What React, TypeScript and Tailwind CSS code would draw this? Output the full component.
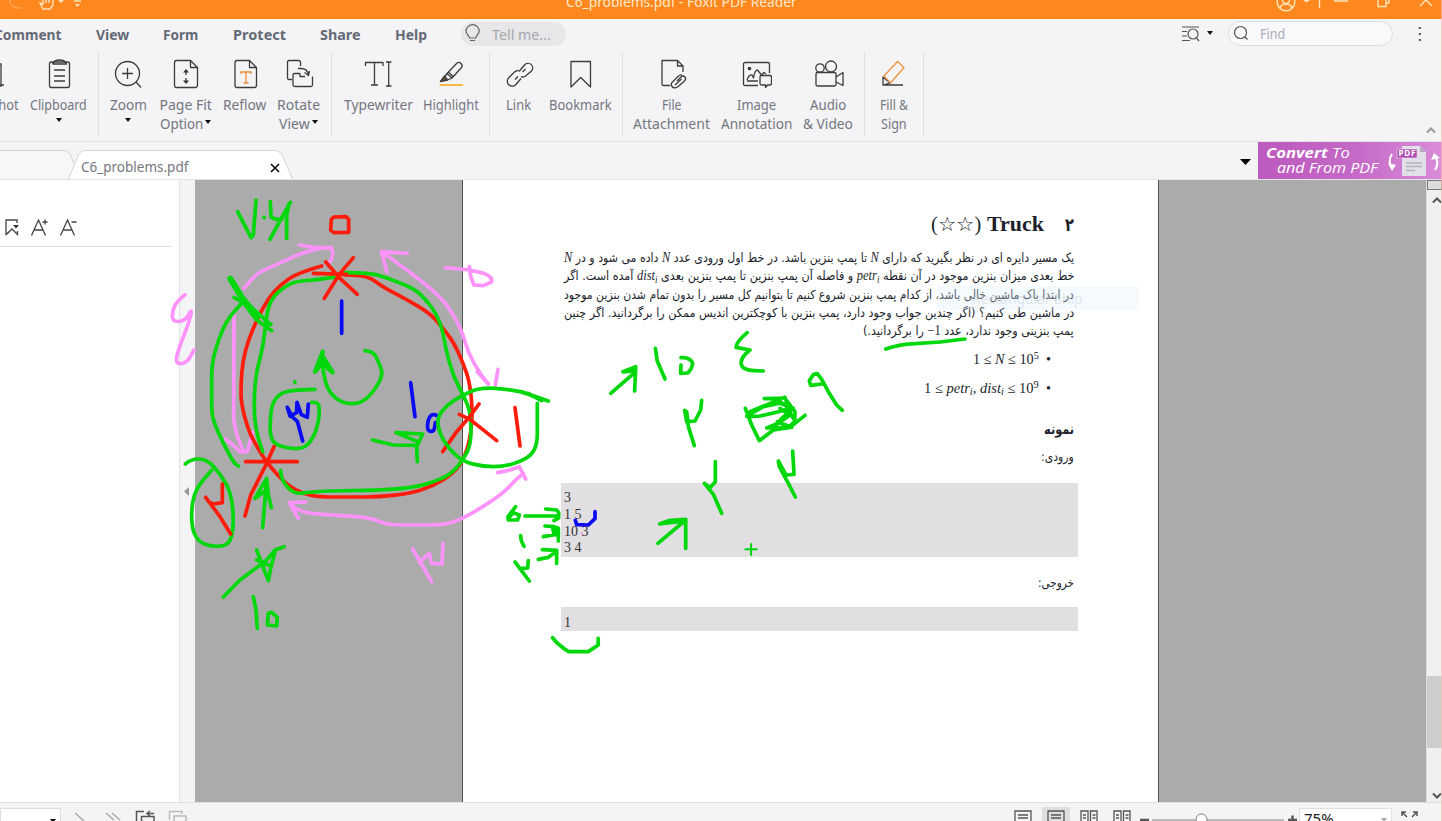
import React, { useLayoutEffect, useRef, useState } from 'react';

const UI = "font-['Noto_Sans','Open_Sans',sans-serif]";
const SERIF = "font-['Liberation_Serif',serif]";
const FA = "font-['DejaVu_Sans',sans-serif]";

/* Single line of text condensed or widened to fill the width of its box. */
function Fit({ className, rtl, children }: { className: string; rtl?: boolean; children: React.ReactNode }) {
  const outer = useRef<HTMLSpanElement>(null);
  const inner = useRef<HTMLSpanElement>(null);
  const [k, setK] = useState(1);
  useLayoutEffect(() => {
    if (outer.current && inner.current) setK(outer.current.offsetWidth / inner.current.offsetWidth);
  }, []);
  return (
    <span ref={outer} dir="ltr" className={`flex shrink-0 ${className}`}>
      <span
        ref={inner}
        dir={rtl ? 'rtl' : 'ltr'}
        className="shrink-0 origin-left whitespace-nowrap"
        style={{ transform: `scaleX(${k})` }}
      >
        {children}
      </span>
    </span>
  );
}

function Icon({ children }: { children: React.ReactNode }) {
  return (
    <svg viewBox="0 0 32 32" className="h-8 w-8 shrink-0" fill="none" stroke="#3c3c3c" strokeWidth="1.3" strokeLinejoin="round">
      {children}
    </svg>
  );
}

const Caret = ({ className = '' }: { className?: string }) => (
  <svg viewBox="0 0 6 4" className={`h-1 w-1.5 shrink-0 ${className}`} fill="#111">
    <path d="M0 0H6L3 4Z" />
  </svg>
);

type ToolProps = { w: string; icon: React.ReactNode; a: string; aw: string; b?: string; bw?: string; caret?: boolean };

function Tool({ w, icon, a, aw, b, bw, caret }: ToolProps) {
  return (
    <div className={`flex shrink-0 flex-col items-center pt-[7px] ${w}`}>
      <Icon>{icon}</Icon>
      <div className="flex h-[19px] items-center mt-[5px]">
        <Fit className={aw}>{a}</Fit>
      </div>
      {b ? (
        <div className="flex h-[19px] items-center gap-0.5">
          <Fit className={bw || ''}>{b}</Fit>
          {caret && <Caret className="-mt-1" />}
        </div>
      ) : (
        caret && <Caret className="mt-1" />
      )}
    </div>
  );
}

const Sep = ({ className = '' }: { className?: string }) => (
  <div className={`mt-0.5 h-[83px] w-px shrink-0 bg-[#dfdfe3] ${className}`} />
);

const GREEN = '#00d80c';
const RED = '#ff1c0a';
const PINK = '#fd92fb';
const BLUE = '#0a0af5';

type Ink = [string, string, number?];

/* Rounds a polyline given as "x y x y ..." by curving through segment midpoints. */
function smooth(points: string) {
  const n = points.trim().split(/\s+/).map(Number);
  let d = `M${n[0]} ${n[1]}`;
  for (let i = 2; i < n.length - 2; i += 2) {
    d += `Q${n[i]} ${n[i + 1]} ${(n[i] + n[i + 2]) / 2} ${(n[i + 1] + n[i + 3]) / 2}`;
  }
  return `${d}L${n[n.length - 2]} ${n[n.length - 1]}`;
}

const DIAGRAM: Ink[] = [
  [PINK, smooth('252 325 275 297 300 275 350 254 400 230 455 210 490 203 518 203 518 235 503 252') + 'M418 195L470 203L515 203'],
  [PINK, 'M222 395L221 720L232 770L250 815M197 777L225 800L240 816L262 815L278 757'],
  [PINK, smooth('75 344 50 365 38 390 36 425 75 424 98 382 85 435 58 500 44 552 80 550 102 510')],
  [PINK, smooth('672 220 740 270 800 315 860 370 905 450 925 520 960 580 985 612') + 'M680 275L665 215L742 220M985 612L952 575M1014 568L1006 615'],
  [PINK, 'M855 263L930 270L972 280Q1000 292 994 306L970 317L942 315L932 290L928 260'],
  [RED, smooth('485 258 410 280 360 315 325 355 295 410 265 480 248 545 243 610 243 670 265 750 285 790 320 848 380 915 430 942 480 951 570 951 660 951 750 940 820 918 880 880 910 840 930 780 938 700 930 610 910 550 880 485 845 440 810 400 740 358 670 322 625 288 555 285')],
  [GREEN, smooth('555 278 630 278 690 297 765 327 800 362 828 400 848 450 858 510 880 590 915 655 932 700 934 790 910 840 870 885 810 910 750 924 650 931 510 932 450 937 400 942 365 900 362 872')],
  [GREEN, smooth('530 290 470 300 410 303 370 322 335 355 320 400 310 500 285 590 282 700 290 760 308 815')],
  [RED, 'M460 280L560 283M580 233L540 280L493 355M497 246L540 295L592 343'],
  [RED, 'M522 111L558 110L566 118L566 157L522 158L512 150L514 118Z'],
  [GREEN, 'M233 95L273 173L280 165L288 60M312 112L313 113M331 65L333 110Q345 122 367 116M391 67L365 113L330 178M387 72L380 105L380 175'],
  [GREEN, 'M211 296L245 352L292 408', 6],
  [GREEN, 'M222 352L250 368L290 420L335 452M255 365L300 405L322 425L333 433L310 432'],
  [GREEN, smooth('250 365 205 410 175 480 155 550 155 630 155 700 165 735 190 790 222 850 236 858')],
  [BLUE, 'M545 363V460M752 608L765 710'],
  [BLUE, smooth('832 707 816 700 803 720 802 753 822 755 826 728')],
  [BLUE, 'M382 682L396 710L412 724L428 783M382 682L390 708L410 698L411 667L424 704L442 712L445 672'],
  [GREEN, smooth('615 512 640 514 655 545 670 582 645 630 605 671 547 671 505 635 488 575 488 515')],
  [GREEN, 'M488 515L465 575L486 550L518 577L492 535M486 530L472 568', 4.3],
  [GREEN, smooth('465 628 380 629 345 655 332 690 329 782 370 803 430 808 460 775 478 720 478 668 455 667') + 'M404 606L405 607'],
  [GREEN, 'M638 780L700 795L772 796M708 758L788 762L770 800L772 845M708 758L770 784'],
  [RED, 'M957 672L925 715L890 755L848 815M898 703L930 718L1010 782M1065 683L1080 798'],
  [GREEN, smooth('1145 662 1110 642 1050 628 960 622 905 647 860 675 830 715 840 765 870 810 910 845 970 860 1030 860 1080 845 1115 825 1132 790 1132 730 1132 670') + 'M1165 663L1085 635M1140 660L1105 640'],
  [RED, 'M257 845H412M342 800L320 850L272 945L255 1008'],
  [GREEN, 'M308 1043L314 970L320 895M285 955L320 895L325 945L334 983M290 952L320 930'],
  [GREEN, smooth('76 852 92 837 140 837 180 880 215 940 222 1040 207 1097 155 1100 115 1085 95 1045 95 970 112 920 155 871')],
  [RED, 'M137 952L180 1010L212 1062M145 965L160 972L187 968L187 912'],
  [GREEN, 'M190 1251L240 1200L320 1140L345 1110L372 1100M290 1110L305 1150L325 1202L332 1165L345 1115M290 1140L325 1155'],
  [GREEN, 'M280 1250L288 1290L292 1345M325 1300L322 1335L350 1338L352 1312L335 1297Z'],
  [PINK, smooth('1090 880 1065 900 1030 940 930 1005 860 1035 770 1035 680 1035 630 1012 510 1005 420 997 388 968') + 'M388 968L437 966M388 968L415 1015M1013 878L1050 870L1078 860L1097 897'],
  [PINK, 'M758 1107L780 1145L815 1205M778 1148L808 1120L815 1150L846 1152L849 1090'],
  [GREEN, 'M1067 980L1044 1010L1045 1020L1073 1020L1078 1005L1060 998L1049 1010M1095 1008H1195M1157 987L1190 990L1196 998V1014L1182 1022'],
  [GREEN, 'M1155 1038L1182 1040L1195 1045V1083M1150 1070L1183 1064L1178 1045M1182 1042L1190 1065M1147 1109L1190 1111V1150M1188 1115L1165 1132L1135 1138'],
  [GREEN, 'M1082 1067L1084 1082L1092 1099M1065 1146L1080 1166L1103 1164L1105 1142M1080 1166L1108 1203'],
  [BLUE, 'M1246 1021L1250 1034L1285 1035L1305 1016V995'],
  [PINK, 'M1265 1060L1267 1061', 2],
];

const NOTES: Ink[] = [
  [GREEN, 'M323 55L328 92L350 147'],
  [GREEN, 'M198 190L268 125M232 125L268 110L265 183M235 126L262 122'],
  [GREEN, 'M580 8Q550 35 549 52L588 60Q562 80 563 102Q567 121 600 122L625 123'],
  [GREEN, 'M968 57Q1010 42 1050 41L1120 36L1190 27'],
  [GREEN, 'M330 640L408 570L335 582L360 572L408 568V655M345 580L395 574'],
  [GREEN, 'M575 658H607M591 642V675', 2],
  [GREEN, 'M35 923Q50 945 80 965L135 965L163 945V925'],
];

const SCRIBBLES: Ink[] = [
  [GREEN, 'M33 53Q60 50 68 70Q65 92 52 99L32 100L33 75'],
  [GREEN, 'M455 118L442 101L430 104L418 122L422 136L455 132M455 118L475 155L500 195L517 211'],
  [GREEN, 'M44 211L50 245L75 243L92 210L95 181M50 215L55 260L73 317'],
  [GREEN, 'M226 205L245 255L268 302L310 270L360 262L405 226M230 228L280 200L335 188L360 205L335 213L270 228L240 230M240 215L300 190L345 172M283 176L345 174'],
  [GREEN, 'M345 176L375 215L374 245L355 262L290 264L325 250L360 225L330 205M330 190L370 205L335 235L318 256M322 245L365 262M345 190L370 235'],
  [GREEN, 'M136 365V425L120 443L103 430L130 463L155 520'],
  [GREEN, 'M368 333L372 403L348 405L325 363L328 380L355 430L376 471'],
];

const Strokes = ({ items }: { items: Ink[] }) => (
  <>
    {items.map(([c, d, w], i) => (
      <path key={i} d={d} stroke={c} strokeWidth={w || 3.7} vectorEffect="non-scaling-stroke" />
    ))}
  </>
);

const V = ({ children }: { children: React.ReactNode }) => (
  <span dir="ltr" className="font-['Liberation_Serif',serif] text-[14px] italic">
    {children}
  </span>
);
const Sub = () => <sub className="text-[10px]">i</sub>;

const PageIcon = ({ split }: { split?: boolean }) => (
  <svg viewBox="0 0 18 12" className="h-3 w-[18px] shrink-0" fill="none" stroke="#555" strokeWidth="1.3">
    {split ? (
      <path d="M1 14V1H8V14M10.500 14V1H17V14M3 5H6M3 8H6M12.500 5H15.500M12.500 8H15.500" />
    ) : (
      <path d="M1 14V1H17V14M4 5H14M4 8H14" />
    )}
  </svg>
);

export default function App() {
  return (
    <div className={`relative flex h-[821px] w-[1442px] flex-col overflow-hidden bg-[#f4f3f6] text-[14px] leading-[19px] text-[#737780] ${UI}`}>
      {/* Title bar */}
      <div className="flex h-[19px] shrink-0 overflow-hidden bg-[#ff871d] text-[#ffe9c9]">
        <svg viewBox="0 0 90 19" className="h-[19px] w-[90px]" fill="none" stroke="#ffe0b8" strokeWidth="1.5">
          <path d="M10 0Q9 9 22 8" stroke="#ffb56e" strokeWidth="1" />
          <path d="M43 0V4L40 3L43 9H50L53 5V0M46 0V3M49 0V3" />
          <path d="M58 0H64L61 3ZM75 4H80L77.500 7Z" fill="#ffe0b8" stroke="none" />
          <path d="M74 1H81" />
        </svg>
        <div className="ml-[476px] -mt-[8px] flex w-[231px]">
          <Fit className="w-[231px]">C6_problems.pdf - Foxit PDF Reader</Fit>
        </div>
        <svg viewBox="0 0 167 19" className="ml-[478px] h-[19px] w-[167px]" fill="none" stroke="#ffe6bd" strokeWidth="1.4">
          <circle cx="11" cy="2" r="8.800" />
          <circle cx="11" cy="0" r="3.500" />
          <path d="M5 8Q6 4 11 4Q16 4 17 8M44.500 0V8M59 1H73M103 0V6.500H111V0M111 3H114V0M145 6L151 0L157 6" />
          <path d="M28 0H35L31.500 2.500Z" fill="#ffe6bd" stroke="none" />
        </svg>
      </div>

      {/* Menu */}
      <div className="flex h-8 shrink-0 items-center overflow-hidden pb-0.5 font-bold text-[#646a75]">
        <Fit className="-ml-1.5 w-[68px]">Comment</Fit>
        <Fit className="ml-[34px] w-[33px]">View</Fit>
        <Fit className="ml-[34px] w-[35px]">Form</Fit>
        <Fit className="ml-[35px] w-[53px]">Protect</Fit>
        <Fit className="ml-[34px] w-[41px]">Share</Fit>
        <Fit className="ml-[34px] w-[32px]">Help</Fit>
        <div className="ml-[34px] flex h-6 w-[105px] items-center rounded-full bg-[#e7e6e8] font-normal text-[#a6a9af]">
          <svg viewBox="0 0 24 24" className="h-6 w-6" fill="none" stroke="#666" strokeWidth="1.2">
            <path d="M8.500 16C8.500 13.500 5 12.500 5 9.300A6.600 6.600 0 0 1 18.200 9.300C18.200 12.500 14.700 13.500 14.700 16ZM9 18.500H14.200" />
          </svg>
          <Fit className="ml-[7px] w-[59px]">Tell me...</Fit>
        </div>
        <svg viewBox="0 0 20 18" className="ml-[615px] h-[18px] w-5" fill="none" stroke="#555" strokeWidth="1.2">
          <path d="M1 2H18M1 6.500H6M1 11H6M1 15.500H9M15.500 13L18 16" />
          <circle cx="12" cy="9" r="5" />
        </svg>
        <Caret className="-mt-0.5 ml-1.5" />
        <div className="ml-[15px] flex h-[25px] w-[165px] -translate-y-px items-center rounded-full border border-[#dddde1] bg-[#f9f8fb] font-normal text-[#a9acb8]">
          <svg viewBox="0 0 16 16" className="ml-1 h-4 w-4" fill="none" stroke="#555" strokeWidth="1.2">
            <circle cx="7.500" cy="7.500" r="6" />
            <path d="M12 12L14.500 14.500" />
          </svg>
          <Fit className="ml-[11px] w-[25px]">Find</Fit>
        </div>
        <svg viewBox="0 0 4 16" className="ml-[25px] h-4 w-1" fill="#666">
          <path d="M.7 1H3V3H.7ZM.7 7H3V9H.7ZM.7 13H3V15H.7Z" />
        </svg>
      </div>

      {/* Ribbon */}
      <div className="flex h-[91px] shrink-0 overflow-hidden border-b border-[#e2e2e5]">
        <div className="flex w-[19px] shrink-0 flex-col items-end pt-[7px]">
          <div className="mr-1"><Icon><path d="M4 6H18V29M15 27H21" /></Icon></div>
          <div className="mt-[5px] flex"><Fit className="w-[57px]">Snapshot</Fit></div>
        </div>
        <Tool w="w-[79px]" a="Clipboard" aw="w-[57px]" caret icon={<><rect x="6.500" y="4" width="20" height="25.500" rx="2" /><path d="M9.500 6H23.500Q22 2 16.500 2T9.500 6M11 12H22M11 18H22M11 23H22" /></>} />
        <Sep />
        <Tool w="w-[58px]" a="Zoom" aw="w-[37px]" caret icon={<><circle cx="15.500" cy="15.500" r="12" /><path d="M24 24L29 29.500M10 15.500H21M15.500 10V21" /></>} />
        <Tool w="w-[57px]" a="Page Fit" aw="w-[52px]" b="Option" bw="w-[43px]" caret icon={<><path d="M20.500 2.500H6.500Q4.500 2.500 4.500 5V27Q4.500 29.500 6.500 29.500H25Q27.500 29.500 27.500 27V9.500ZM20.500 2.500V9.500H27.500M16 12V17M16 20V25" /><path d="M13 14.500L16 11L19 14.500ZM13 22.500L16 26L19 22.500Z" fill="#333" stroke="none" /></>} />
        <Tool w="w-[61px]" a="Reflow" aw="w-[43px]" icon={<><path d="M20.500 2.500H8Q6 2.500 6 5V27Q6 29.500 8 29.500H25.500Q27.500 29.500 27.500 27V9.500ZM20.500 2.500V9.500H27.500" /><path d="M12 16V14H22V16M17 14V25M14.500 25H19.500" stroke="#f08a35" /></>} />
        <Tool w="w-[47px]" a="Rotate" aw="w-[43px]" b="View" bw="w-[31px]" caret icon={<><path d="M9 21.500H6Q4.500 21.500 4.500 20V4Q4.500 2.500 6 2.500H15.500Q17.500 2.500 17.500 4.500V8M17 15.500H11.500Q10 15.500 10 17V27Q10 28.500 12 28.500H28Q29.500 28.500 29.500 27V18.500M15 10.500H19Q24.500 11 25.500 17M17 15.500V18.500H22M21.500 14.500L25.500 17.500L26.500 13" /></>} />
        <Sep className="ml-[9px]" />
        <Tool w="w-[92px]" a="Typewriter" aw="w-[69px]" icon={<path d="M3.500 8V4.500H21V8M12.500 4.500V27M9 27H16M24 4H29.500M24 28H29.500M26.700 4V28" />} />
        <Tool w="w-[54px]" a="Highlight" aw="w-[56px]" icon={<><path d="M12 15.500L22 5Q24 3.500 26 5.500T26.500 9.500L17 20ZM12 15.500L9.500 19L12.500 22L17 20M13.500 14L18.500 19" /><path d="M9.500 18L5.500 23.500L12.500 22Z" fill="#6b512a" /><path d="M4.500 27H28" stroke="#fcb942" strokeWidth="2" /></>} />
        <Sep className="ml-[11px]" />
        <Tool w="w-[57px]" a="Link" aw="w-[25px]" icon={<><path d="M16 13.500L22 6.500A4.600 4.600 0 0 1 28.500 13L22 18.500Q19.500 19.500 18 18.500" /><path d="M15.500 12.500Q13 12.500 11.500 14L6 19.500A4.600 4.600 0 0 0 12.500 27L18 20.500M12 21.500L15 18.500M19.500 14L22.500 11" /></>} />
        <Tool w="w-[66px]" a="Bookmark" aw="w-[63px]" icon={<path d="M7 3.500H26.500V29L16.700 19.500L7 29Z" />} />
        <Sep className="ml-[9px]" />
        <Tool w="w-[97px]" a="File" aw="w-[19px]" b="Attachment" bw="w-[77px]" icon={<><path d="M14 27.500H7Q6 27.500 6 26V2.500H21.500L27 8V14M21.500 2.500V8H27" /><path d="M21 23L25 19Q27.500 17 29 19T28.500 23L21.500 29Q18 31 16 28.500T17 23.500L22 18.500Q24 16.500 26 17M19 27L25.500 21" /></>} />
        <Tool w="w-[72px]" a="Image" aw="w-[39px]" b="Annotation" bw="w-[71px]" icon={<><path d="M18 27.500H5Q3.500 27.500 3.500 26V6Q3.500 4.500 5 4.500H28Q29.500 4.500 29.500 6V15M7 23H18M7 22Q9 16.500 12 17L13.500 20Q14.500 12.500 17.500 12L21.500 17L24 14.500L26 16" /><path d="M21.500 17.500H30Q31.500 17.500 31.500 19V25.500Q31.500 27 30 27H27.500L25.500 29.500V27H21.500Q20 27 20 25.500V19Q20 17.500 21.500 17.500Z" fill="#f4f3f6" /><circle cx="9.500" cy="10.500" r="1.200" fill="#333" /></>} />
        <Tool w="w-[72px]" a="Audio" aw="w-[36px]" b="& Video" bw="w-[50px]" icon={<><rect x="4" y="14.500" width="20" height="13.500" rx="1.500" /><circle cx="8" cy="10" r="4.200" /><circle cx="19" cy="8.500" r="5.500" /><path d="M24 19L31 14.500V27.500L24 24" /></>} />
        <Sep />
        <Tool w="w-[58px]" a="Fill &" aw="w-[28px]" b="Sign" bw="w-[26px]" icon={<><path d="M5 27H25M5 27V19L12 25Z" /><path d="M6 18L19.500 3.500L26 9.500L12.500 25Z" stroke="#f0933f" /></>} />
        <Sep />
        <svg viewBox="0 0 10 8" className="ml-[502px] mt-[75px] h-2 w-2.5" fill="none" stroke="#999" strokeWidth="2"><path d="M1 6.500L5 2.500L9 6.500" /></svg>
      </div>

      {/* Document tabs */}
      <div className="flex h-[38px] shrink-0 overflow-hidden border-b border-[#e4e4e8]">
        <div className="grid w-[300px] shrink-0">
          <svg viewBox="0 0 300 38" className="col-start-1 row-start-1 h-[38px] w-[300px]" fill="#f7f6f9" stroke="#d4d4d8">
            <path d="M-2 8.500H64Q69 9 71 14L76 26V38H-2Z" />
            <path d="M68 38L77 16Q80 8.500 85 8.500H275Q280 8.500 283 15L293 38" fill="#fff" />
          </svg>
          <div className="col-start-1 row-start-1 flex items-center pl-[81px] pt-2.5">
            <Fit className="w-[107px]">C6_problems.pdf</Fit>
            <svg viewBox="0 0 10 10" className="mt-1 ml-[82px] h-2.5 w-2.5" stroke="#111" strokeWidth="1.700"><path d="M1 1L9 9M9 1L1 9" /></svg>
          </div>
        </div>
        <svg viewBox="0 0 12 6" className="ml-[940px] mt-[17px] h-1.5 w-3 shrink-0"><path d="M0 0H11L5.500 6Z" /></svg>
        <div className="ml-1.5 flex h-[37px] w-[184px] shrink-0 bg-linear-to-r from-[#bd5abf] via-[#c468c6] to-[#d98bd8] text-[14.500px] italic leading-[15px] text-white font-['Open_Sans',sans-serif]">
          <div className="flex w-[130px] flex-col pt-[3px] pl-2">
            <div className="flex"><Fit className="w-[84px]"><b>Convert</b> To</Fit></div>
            <div className="ml-[11px] flex"><Fit className="w-[101px]">and From PDF</Fit></div>
          </div>
          <svg viewBox="0 0 54 37" className="h-[37px] w-[54px] not-italic" fill="none">
            <path d="M4 12Q0 18 3 25" stroke="#fff" strokeWidth="2" />
            <path d="M0 21L4 29L8 23Z" fill="#fff" />
            <path d="M14 4H32L38 10V34H14Z" fill="#e3dfe8" />
            <path d="M32 4L38 10H32Z" fill="#b9a5c0" />
            <path d="M18 21H34M18 24.500H34M18 28.500H27" stroke="#b6b2ba" strokeWidth="1.400" />
            <rect x="9" y="7" width="20" height="9" fill="#b14fb4" stroke="#eedcf0" strokeWidth=".6" />
            <text x="10.500" y="14.300" fontSize="8" fontWeight="700" fontStyle="normal" fill="#fff" textLength="17">PDF</text>
            <path d="M47 28Q51 22 48 15" stroke="#fff" strokeWidth="2.200" />
            <path d="M43 18L46 11L52 16Z" fill="#fff" />
          </svg>
        </div>
      </div>

      {/* Workspace */}
      <div className="flex h-[622px] shrink-0">
        <div className="w-[179px] bg-white">
          <div className="flex h-[67px] w-[171px] items-center border-b border-[#dcdce0] pt-7">
            <svg viewBox="0 0 90 22" className="h-[22px] w-[90px]" fill="none" stroke="#444" strokeWidth="1.300">
              <path d="M17 7V4H6V18.500L9 16.500M6 18.500L12 13L17.500 18.500V15" />
              <path d="M13 9H19L16 12.500Z" fill="#333" stroke="none" />
              <path d="M31.500 19.500L38.500 4L45.500 19.500M34 14H43M42.500 6H47.500M45 3.500V8.500M60.500 19.500L67.500 4L74.500 19.500M63 14H72M71.500 6H76.500" />
            </svg>
          </div>
        </div>
        <div className="flex w-4 items-center border-l border-[#e2e2e5] bg-[#f4f3f6]">
          <svg viewBox="0 0 5 9" className="ml-1 h-[9px] w-[5px]"><path d="M5 0V9L0 4.500Z" fill="#999" /></svg>
        </div>
        <div className="flex w-[1231px] bg-[#ababab] pl-[267px]">
          <div className="flex h-full w-[697px] flex-col border-x border-[#555] bg-white pr-[80px] pl-[98px] text-[#1c1f2b]">
            <div className={`mt-8 flex h-6 items-center justify-end pr-1 ${SERIF}`}>
              <Fit className="w-[50px] text-[20px]">(☆☆)</Fit>
              <Fit className="ml-1.5 w-[57px] text-[20px] font-bold">Truck</Fit>
              <span className="ml-[21px] flex"><Fit className={`w-[9px] text-[18px] font-bold ${FA}`}>۲</Fit></span>
            </div>
            <div className={`mt-[13px] flex flex-col pl-[3px] text-[12.500px] leading-[18px] ${FA}`}>
              <div className="flex h-[18.250px]"><Fit rtl className="w-[510px]">یک مسیر دایره ای در نظر بگیرید که دارای <V>N</V> تا پمپ بنزین باشد. در خط اول ورودی عدد <V>N</V> داده می شود و در <V>N</V></Fit></div>
              <div className="flex h-[18.250px]"><Fit rtl className="w-[510px]">خط بعدی میزان بنزین موجود در آن نقطه <V>petr<Sub /></V> و فاصله آن پمپ بنزین تا پمپ بنزین بعدی <V>dist<Sub /></V> آمده است. اگر</Fit></div>
              <div className="flex h-[18.250px]"><Fit rtl className="w-[510px]">در ابتدا باک ماشین خالی باشد، از کدام پمپ بنزین شروع کنیم تا بتوانیم کل مسیر را بدون تمام شدن بنزین موجود</Fit></div>
              <div className="flex h-[18.250px]"><Fit rtl className="w-[510px]">در ماشین طی کنیم؟ (اگر چندین جواب وجود دارد، پمپ بنزین با کوچکترین اندیس ممکن را برگردانید. اگر چنین</Fit></div>
              <div className="flex h-[18.250px] pl-[299px]"><Fit rtl className="w-[211px]">پمپ بنزینی وجود ندارد، عدد <span dir="ltr" className={`text-[14px] ${SERIF}`}>−1</span> را برگردانید.)</Fit></div>
            </div>
            <div className={`mt-2.5 flex h-[18px] items-center justify-end pr-[26px] text-[14px] ${SERIF}`}>
              <Fit className="w-[66px]">1 ≤ <i>N</i> ≤ 10<sup className="text-[10px]">5</sup></Fit><span className="ml-[7px] w-[6px]">•</span>
            </div>
            <div className={`mt-[11px] flex h-[18px] items-center justify-end pr-[26px] text-[14px] ${SERIF}`}>
              <Fit className="w-[115px]">1 ≤ <i>petr<Sub />, dist<Sub /></i> ≤ 10<sup className="text-[10px]">9</sup></Fit><span className="ml-[7px] w-[6px]">•</span>
            </div>
            <div className={`mt-[22px] flex h-5 items-center justify-end pr-[4px] text-[14px] font-bold ${FA}`}><Fit rtl className="w-[30px]">نمونه</Fit></div>
            <div className={`mt-[8px] flex h-[18px] items-center justify-end pr-[4px] text-[12.500px] ${FA}`}><Fit rtl className="w-[33px]">ورودی:</Fit></div>
            <div className={`mt-[18px] flex h-[74px] flex-col bg-[#e1dfe2] pt-[7px] pl-[3px] text-[14px] leading-[16.700px] text-[#333] ${SERIF}`}>
              <span>3</span><span>1 5</span><span>10 3</span><span>3 4</span>
            </div>
            <div className={`mt-4 flex h-[18px] items-center justify-end pr-1 text-[12.500px] ${FA}`}><Fit rtl className="w-[36px]">خروجی:</Fit></div>
            <div className={`mt-4 flex h-6 bg-[#e1dfe2] pt-2 pl-[3px] text-[14px] leading-4 text-[#333] ${SERIF}`}>1</div>
          </div>
        </div>
        <div className="flex w-4 flex-col items-center border-l border-[#dedde0] bg-[#f0eff2]">
          <div className="h-2.5 w-full border border-[#777] bg-[#dddde0]" />
          <svg viewBox="0 0 10 8" className="mt-1.5 ml-1 h-2 w-2.5" fill="none" stroke="#555" strokeWidth="2"><path d="M1 6.500L5 2.500L9 6.500" /></svg>
          <div className="mt-[472px] h-[72px] w-full bg-[#cdccce]" />
          <svg viewBox="0 0 10 8" className="mt-[44px] ml-1 h-2 w-2.5" fill="none" stroke="#555" strokeWidth="2"><path d="M1 1.500L5 5.500L9 1.500" /></svg>
        </div>
      </div>

      {/* Status bar */}
      <div className="flex h-[19px] shrink-0 overflow-hidden border-t border-[#dededf]">
        <div className="mt-[5px] flex h-5 w-[61px] border border-[#dedee2] bg-white pt-2.5 pl-[49px]"><Caret /></div>
        <svg viewBox="0 0 130 18" className="h-[18px] w-[130px]" fill="none" stroke="#aaa" strokeWidth="1.500">
          <path d="M14 10L22 17L18 21M45 10L53 17M51 10L59 17" />
          <path d="M83 8.500H75.500V18M80.500 18V13.500H93V18M86 10.500H93M89 8L86 10.500L89 13" stroke="#555" />
          <path d="M108.500 17V8.500H121V11M113 18V13H125V18" stroke="#bbb" />
        </svg>
        <div className="ml-[823px] mt-[7px] flex">
          <PageIcon />
          <div className="-mt-[3px] ml-2.5 flex h-4 w-7 justify-center bg-[#dededf] pt-[3px]"><PageIcon /></div>
          <div className="ml-2.5 flex"><PageIcon split /></div>
          <div className="ml-[15px] flex"><PageIcon split /></div>
        </div>
        <svg viewBox="0 0 160 18" className="ml-[8px] h-[18px] w-[160px]" fill="none">
          <path d="M1 17H10M149 17H158M153.500 12.500V18" stroke="#555" strokeWidth="2.400" />
          <path d="M13 17H145" stroke="#bbb" strokeWidth="2" />
          <circle cx="62.500" cy="16.500" r="5.500" fill="#fff" stroke="#777" />
        </svg>
        <div className="mt-[5px] flex h-5 w-[93px] border border-[#e0e0e3] bg-white pl-1 text-[#222]">
          <Fit className="w-[30px]">75%</Fit>
          <svg viewBox="0 0 6 4" className="ml-[47px] mt-[9px] h-1 w-1.5" fill="#aaa"><path d="M0 0H6L3 4Z" /></svg>
        </div>
        <svg viewBox="0 0 20 12" className="ml-2 mt-[7px] h-3 w-5" fill="none" stroke="#555" strokeWidth="1.500">
          <path d="M2 6V2H6M2 2L7 7M13 2H17V6M17 2L12 7" />
        </svg>
      </div>

      {/* Fading tooltip */}
      <div className="absolute left-[937px] top-[286px] flex h-6 w-[202px] items-center bg-[#d9edfb]/30 pl-[35px] text-[#b9bcc4]/35">
        <Fit className="w-[111px]">Rectangular Ship</Fit>
      </div>

      {/* Pen annotations */}
      <svg viewBox="0 0 1442 821" className="pointer-events-none absolute inset-0 h-[821px] w-[1442px]" fill="none" strokeLinecap="round" strokeLinejoin="round">
        <g transform="translate(160 180) scale(.33333)"><Strokes items={DIAGRAM} /></g>
        <g transform="translate(540 330) scale(.35714 .33333)"><Strokes items={NOTES} /></g>
        <g transform="translate(670 340) scale(.33333)"><Strokes items={SCRIBBLES} /></g>
      </svg>
      <div className="absolute top-0 right-0 h-full w-px bg-[#ffb6b6]/70" />
    </div>
  );
}
